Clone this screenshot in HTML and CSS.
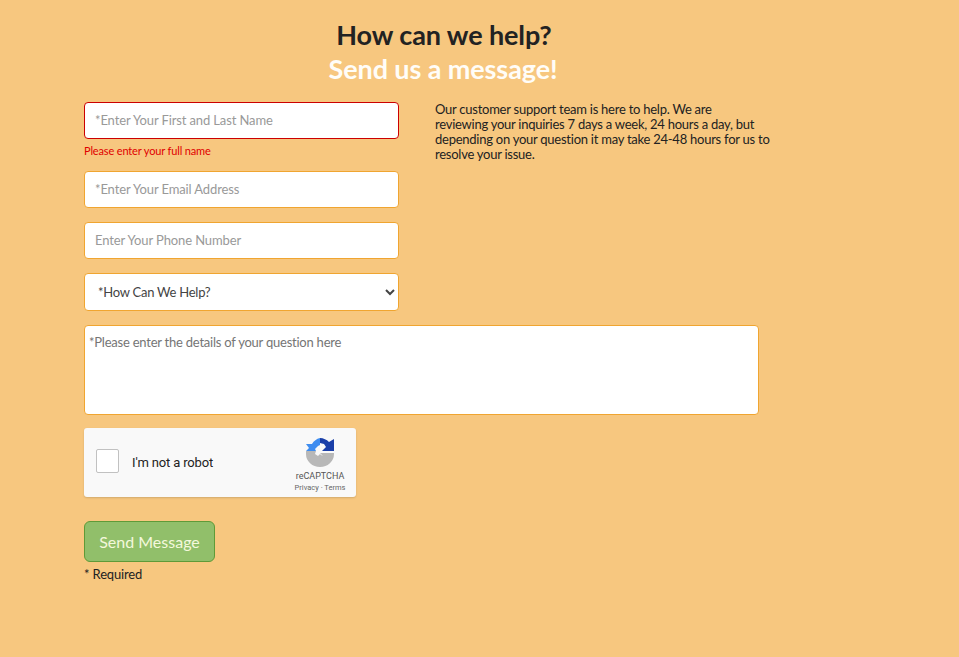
FILE: index.html
```
<!DOCTYPE html>
<html lang="en">
<head>
    <meta charset="UTF-8">
    <title>Contact Us</title>
    <link rel="stylesheet" href="styles.css">
</head>
<body>

    <div class="contact-page">
        <div class="heading">
            <h1>How can we help?</h1>
            <h2>Send us a message!</h2>
        </div>

        <form class="contact-form">
            <div class="top-row">
                <div class="fields">
                    <input class="field field-error" type="text" placeholder="*Enter Your First and Last Name">
                    <div class="error-text">Please enter your full name</div>
                    <input class="field" type="text" placeholder="*Enter Your Email Address">
                    <input class="field" type="text" placeholder="Enter Your Phone Number">
                    <select class="field field-select">
                        <option>*How Can We Help?</option>
                    </select>
                </div>
                <p class="intro">Our customer support team is here to help. We are<br>reviewing your inquiries 7 days a week, 24 hours a day, but depending on your question it may take 24-48 hours for us to resolve your issue.</p>
            </div>

            <textarea class="details" placeholder="*Please enter the details of your question here"></textarea>

            <div class="captcha">
                <span class="captcha-box"></span>
                <span class="captcha-label">I'm not a robot</span>
                <div class="captcha-logo">
                    <svg width="30" height="30" viewBox="0 0 30 30">
                        <path fill="#b8b8b8" d="M1 14h10l-1 3 3 2 2-2 1 1 2 1-3-3h14v1a14 13 0 0 1-28 0z"/>
                        <path fill="#3f8df0" d="M15 1v7l-2 1-1 1-2 2 1 2H1l3-3-3-4h6A13 13 0 0 1 15 1z"/>
                        <path fill="#1a3fa8" d="M15 1a14 14 0 0 1 9 4l5-3v12H17l4-4-2-3-4-1z"/>
                    </svg>
                    <div class="captcha-name">reCAPTCHA</div>
                    <div class="captcha-links">Privacy · Terms</div>
                </div>
            </div>

            <button class="send-btn" type="button">Send Message</button>
            <div class="required">* Required</div>
        </form>
    </div>

</body>
</html>
```

FILE: styles.css
```
body {
    font-family: 'Lato', sans-serif;
    background: #f7c77f;
    margin: 0;
    padding: 0;
    color: #222;
}

.contact-page {
    width: 675px;
    margin-left: 84px;
    padding-top: 17px;
}

.heading {
    width: 720px;
    text-align: center;
}

.heading h1 {
    font-size: 27px;
    line-height: 36px;
    font-weight: 700;
    letter-spacing: -0.1px;
    margin: 0;
    color: #222;
}

.heading h2 {
    font-size: 27px;
    line-height: 31px;
    font-weight: 700;
    letter-spacing: -0.1px;
    margin: 0;
    padding-right: 2px;
    color: #fffdf8;
}

.contact-form {
    margin-top: 18px;
}

.top-row {
    display: flex;
    align-items: flex-start;
}

.fields {
    width: 315px;
    flex: none;
    display: flex;
    flex-direction: column;
}

.field {
    box-sizing: border-box;
    width: 315px;
    height: 37px;
    margin: 0 0 14px;
    padding: 0 10px 2px;
    background: #fff;
    border: 1px solid #f0a530;
    border-radius: 4px;
    font-family: 'Lato', sans-serif;
    font-size: 13px;
    letter-spacing: -0.12px;
    color: #444;
    outline: none;
}

.field::placeholder {
    color: #999;
    opacity: 1;
}

.field-error {
    border-color: #cc0000;
    margin-bottom: 5px;
}

.error-text {
    font-size: 11px;
    line-height: 14px;
    letter-spacing: -0.15px;
    color: #e00000;
    margin-bottom: 13px;
}

.field-select {
    height: 38px;
    color: #444;
    margin-bottom: 0;
    padding: 0 0 0 9px;
    letter-spacing: -0.25px;
}

.intro {
    flex: none;
    width: 340px;
    margin: 0 0 0 36px;
    font-size: 13px;
    line-height: 15px;
    letter-spacing: -0.25px;
    color: #222;
}

.details {
    display: block;
    box-sizing: border-box;
    width: 675px;
    height: 90px;
    margin-top: 14px;
    padding: 8px 4px;
    background: #fff;
    border: 1px solid #f0a530;
    border-radius: 4px;
    font-family: 'Lato', sans-serif;
    font-size: 13px;
    line-height: 17px;
    letter-spacing: -0.23px;
    resize: none;
    outline: none;
}

.details::placeholder {
    color: #757575;
    opacity: 1;
}

.captcha {
    box-sizing: border-box;
    width: 272px;
    height: 69px;
    margin-top: 13px;
    display: flex;
    align-items: center;
    background: #f9f9f9;
    border-radius: 3px;
    box-shadow: 0 1px 2px rgba(0, 0, 0, 0.15);
    padding-left: 12px;
}

.captcha-box {
    box-sizing: border-box;
    width: 23px;
    height: 24px;
    margin-bottom: 4px;
    background: #fff;
    border: 1px solid #c1c1c1;
    border-radius: 2px;
}

.captcha-label {
    font-family: 'Roboto', sans-serif;
    font-size: 13px;
    letter-spacing: -0.15px;
    color: #222;
    margin-left: 13px;
}

.captcha-logo {
    margin-left: auto;
    margin-top: 4px;
    margin-right: 5px;
    width: 62px;
    text-align: center;
    font-family: 'Roboto', sans-serif;
    color: #555;
}

.captcha-logo svg {
    display: block;
    margin: 0 auto 3px;
}

.captcha-name {
    font-size: 9px;
    line-height: 12px;
}

.captcha-links {
    font-size: 7.5px;
    line-height: 11px;
    color: #666;
}

.send-btn {
    display: block;
    box-sizing: border-box;
    width: 131px;
    height: 41px;
    margin-top: 24px;
    padding: 0;
    background: #91bf6a;
    border: 1px solid #5f9a38;
    border-radius: 6px;
    font-family: 'Lato', sans-serif;
    font-size: 16px;
    color: #f4f8dc;
}

.required {
    font-size: 13px;
    line-height: 16px;
    letter-spacing: -0.15px;
    margin-top: 4px;
    color: #222;
}
```
